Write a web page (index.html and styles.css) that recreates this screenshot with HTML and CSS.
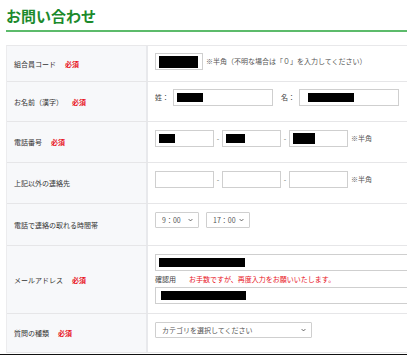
FILE: index.html
```html
<!DOCTYPE html>
<html>
<head>
    <meta charset="UTF-8">
    <title>お問い合わせ</title>
    <link rel="stylesheet" href="styles.css">
</head>
<body>
    <div class="page">
        <h2 class="title">お問い合わせ</h2>
        <div class="form">
            <div class="row r1">
                <div class="label">組合員コード<span class="req">必須</span></div>
                <div class="value">
                    <span class="box w-code"><i class="mask big" style="width:39px"></i></span>
                    <span class="note">※半角（不明な場合は「０」を入力してください）</span>
                </div>
            </div>
            <div class="row r2">
                <div class="label">お名前（漢字）<span class="req">必須</span></div>
                <div class="value">
                    <span class="pre">姓：</span>
                    <span class="box w-name"><i class="mask" style="width:26px"></i></span>
                    <span class="pre sp">名：</span>
                    <span class="box w-name"><i class="mask" style="width:46px;margin-left:5px"></i></span>
                </div>
            </div>
            <div class="row r3">
                <div class="label">電話番号<span class="req">必須</span></div>
                <div class="value">
                    <span class="box w-tel"><i class="mask" style="width:16px"></i></span>
                    <span class="dash">-</span>
                    <span class="box w-tel"><i class="mask" style="width:19px"></i></span>
                    <span class="dash">-</span>
                    <span class="box w-tel"><i class="mask tall" style="width:22px"></i></span>
                    <span class="note">※半角</span>
                </div>
            </div>
            <div class="row r4">
                <div class="label">上記以外の連絡先</div>
                <div class="value">
                    <span class="box w-tel"></span>
                    <span class="dash">-</span>
                    <span class="box w-tel"></span>
                    <span class="dash">-</span>
                    <span class="box w-tel"></span>
                    <span class="note">※半角</span>
                </div>
            </div>
            <div class="row r5">
                <div class="label">電話で連絡の取れる時間帯</div>
                <div class="value">
                    <span class="select w-time">9：00<svg viewBox="0 0 8 5"><path d="M1 1l3 3 3-3"/></svg></span>
                    <span class="select w-time">17：00<svg viewBox="0 0 8 5"><path d="M1 1l3 3 3-3"/></svg></span>
                </div>
            </div>
            <div class="row r6">
                <div class="label">メールアドレス<span class="req">必須</span></div>
                <div class="value col">
                    <span class="box w-mail"><i class="mask" style="width:86px"></i></span>
                    <div class="confirm">確認用<span class="warn">お手数ですが、再度入力をお願いいたします。</span></div>
                    <span class="box w-mail"><i class="mask" style="width:85px;margin-left:2px"></i></span>
                </div>
            </div>
            <div class="row r7">
                <div class="label">質問の種類<span class="req">必須</span></div>
                <div class="value">
                    <span class="select w-cat">カテゴリを選択してください<svg viewBox="0 0 8 5"><path d="M1 1l3 3 3-3"/></svg></span>
                </div>
            </div>
        </div>
        <div class="edge"></div>
    </div>
</body>
</html>
```

FILE: styles.css
```css
html, body, h2{margin: 0;padding: 0;}
html{overflow: hidden;}
body{font-family: "Noto Sans CJK JP", "Noto Sans", sans-serif;font-size: 7px;color: #333;background: #fff;}
.page{width: 407px;overflow: hidden;}
.title{height: 30px;line-height: 32px;font-size: 15px;font-weight: bold;color: #1c8a2c;border-bottom: 2px solid #5cbb6b;margin: 0 0 13px 6px;}
.form{margin-left: 6px;width: 520px;border-top: 1px solid #e8e8ea;border-left: 1px solid #ececee;}
.row{display: grid;grid-template-columns: 141px 1fr;border-bottom: 1px solid #e6e6e8;}
.r1{height: 35px;}
.r2{height: 39px;}
.r3, .r4{height: 40px;}
.r5{height: 41px;}
.r6{height: 67px;}
.r7{height: 38px;}
.label{display: flex;align-items: center;padding-left: 7px;background: #f7f8fa;border-right: 2px solid #e8e9ec;}
.req{color: #e8121c;font-weight: bold;margin-left: 9px;}
.value{display: flex;align-items: flex-start;padding: 8px 0 0 7px;}
.r1 .value, .r2 .value{padding-top: 7px;}
.value.col{flex-direction: column;}
.box{display: flex;align-items: center;height: 15px;border: 1px solid #cfcfcf;background: #fff;padding-left: 3px;box-sizing: content-box;}
.mask{display: block;height: 9px;background: #000;}
.mask.big{height: 12px;}
.mask.tall{height: 11px;}
.w-code{width: 43px;}
.w-name{width: 95px;}
.w-tel{width: 54px;}
.w-mail{width: 300px;}
.note{line-height: 17px;margin-left: 3px;color: #555;}
.pre{line-height: 17px;width: 18px;color: #444;}
.pre.sp{margin-left: 8px;}
.dash{width: 8px;text-align: center;line-height: 17px;color: #666;}
.select{display: flex;align-items: center;justify-content: space-between;height: 14px;border: 1px solid #cfcfcf;border-radius: 1px;padding: 0 5px 0 6px;color: #555;}
.select svg{width: 5px;height: 4px;fill: none;stroke: #444;stroke-width: 1.3;}
.w-time{width: 31px;margin-right: 7px;}
.w-cat{width: 144px;}
.confirm{line-height: 16px;color: #444;}
.warn{color: #e8121c;margin-left: 13px;}
.edge{height: 2px;margin-top: 1px;background: #111;}
```
